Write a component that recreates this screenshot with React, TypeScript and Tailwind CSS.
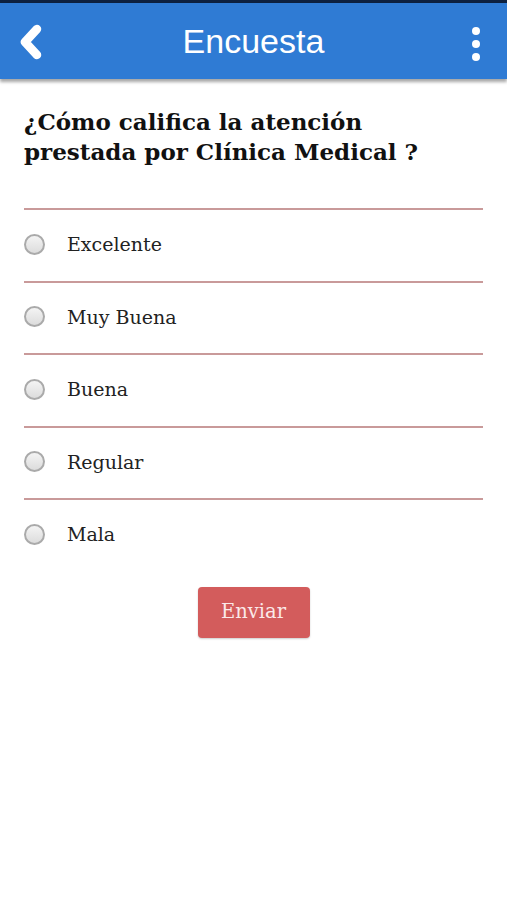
import { useState } from "react";

const options = ["Excelente", "Muy Buena", "Buena", "Regular", "Mala"];

export default function App() {
  const [selected, setSelected] = useState<string | null>(null);

  return (
    <div className="min-h-[900px] bg-white">
      <div className="h-[3px] bg-[#0d2140]" />
      <header className="relative flex h-[76px] items-center justify-center bg-[#2f7bd4] shadow-[0_3px_3px_rgba(0,0,0,0.35)]">
        <button className="absolute left-[16px] top-[21px]">
          <svg width="30" height="36" viewBox="0 0 30 36">
            <path d="M21 5 L9 18 L21 31" fill="none" stroke="white" strokeWidth="8.5" strokeLinecap="round" strokeLinejoin="round" />
          </svg>
        </button>
        <h1 className="font-['Liberation_Sans',Arial,sans-serif] text-[34px] leading-none text-white">Encuesta</h1>
        <div className="absolute right-[27px] top-[24px] flex flex-col gap-[5px]">
          <span className="h-[8px] w-[8px] rounded-full bg-white" />
          <span className="h-[8px] w-[8px] rounded-full bg-white" />
          <span className="h-[8px] w-[8px] rounded-full bg-white" />
        </div>
      </header>

      <main className="px-[24px] font-['DejaVu_Serif',Georgia,serif]">
        <h2 className="mt-[28px] text-[23px] font-bold leading-[30px] text-[#111]">
          ¿Cómo califica la atención
          <br />
          prestada por Clínica Medical ?
        </h2>

        <div className="mt-[41px]">
          {options.map((o) => (
            <label key={o} className="flex h-[72.5px] cursor-pointer items-center border-t-2 border-[#c99a9a] pb-[2px]">
              <span
                onClick={() => setSelected(o)}
                className="flex h-[21px] w-[21px] items-center justify-center rounded-full border-2 border-[#aaa] bg-gradient-to-b from-[#f4f4f4] to-[#dcdcdc]"
              >
                {selected === o && <span className="h-[9px] w-[9px] rounded-full bg-[#444]" />}
              </span>
              <span className="ml-[22px] text-[19px] text-[#222]">{o}</span>
            </label>
          ))}
        </div>

        <div className="mt-[16px] flex justify-center">
          <button className="h-[51px] w-[112px] rounded-[4px] bg-[#d35c5c] text-[19.5px] text-[#fbe9e9] shadow-[0_1px_2px_rgba(0,0,0,0.2)]">
            Enviar
          </button>
        </div>
      </main>
    </div>
  );
}
